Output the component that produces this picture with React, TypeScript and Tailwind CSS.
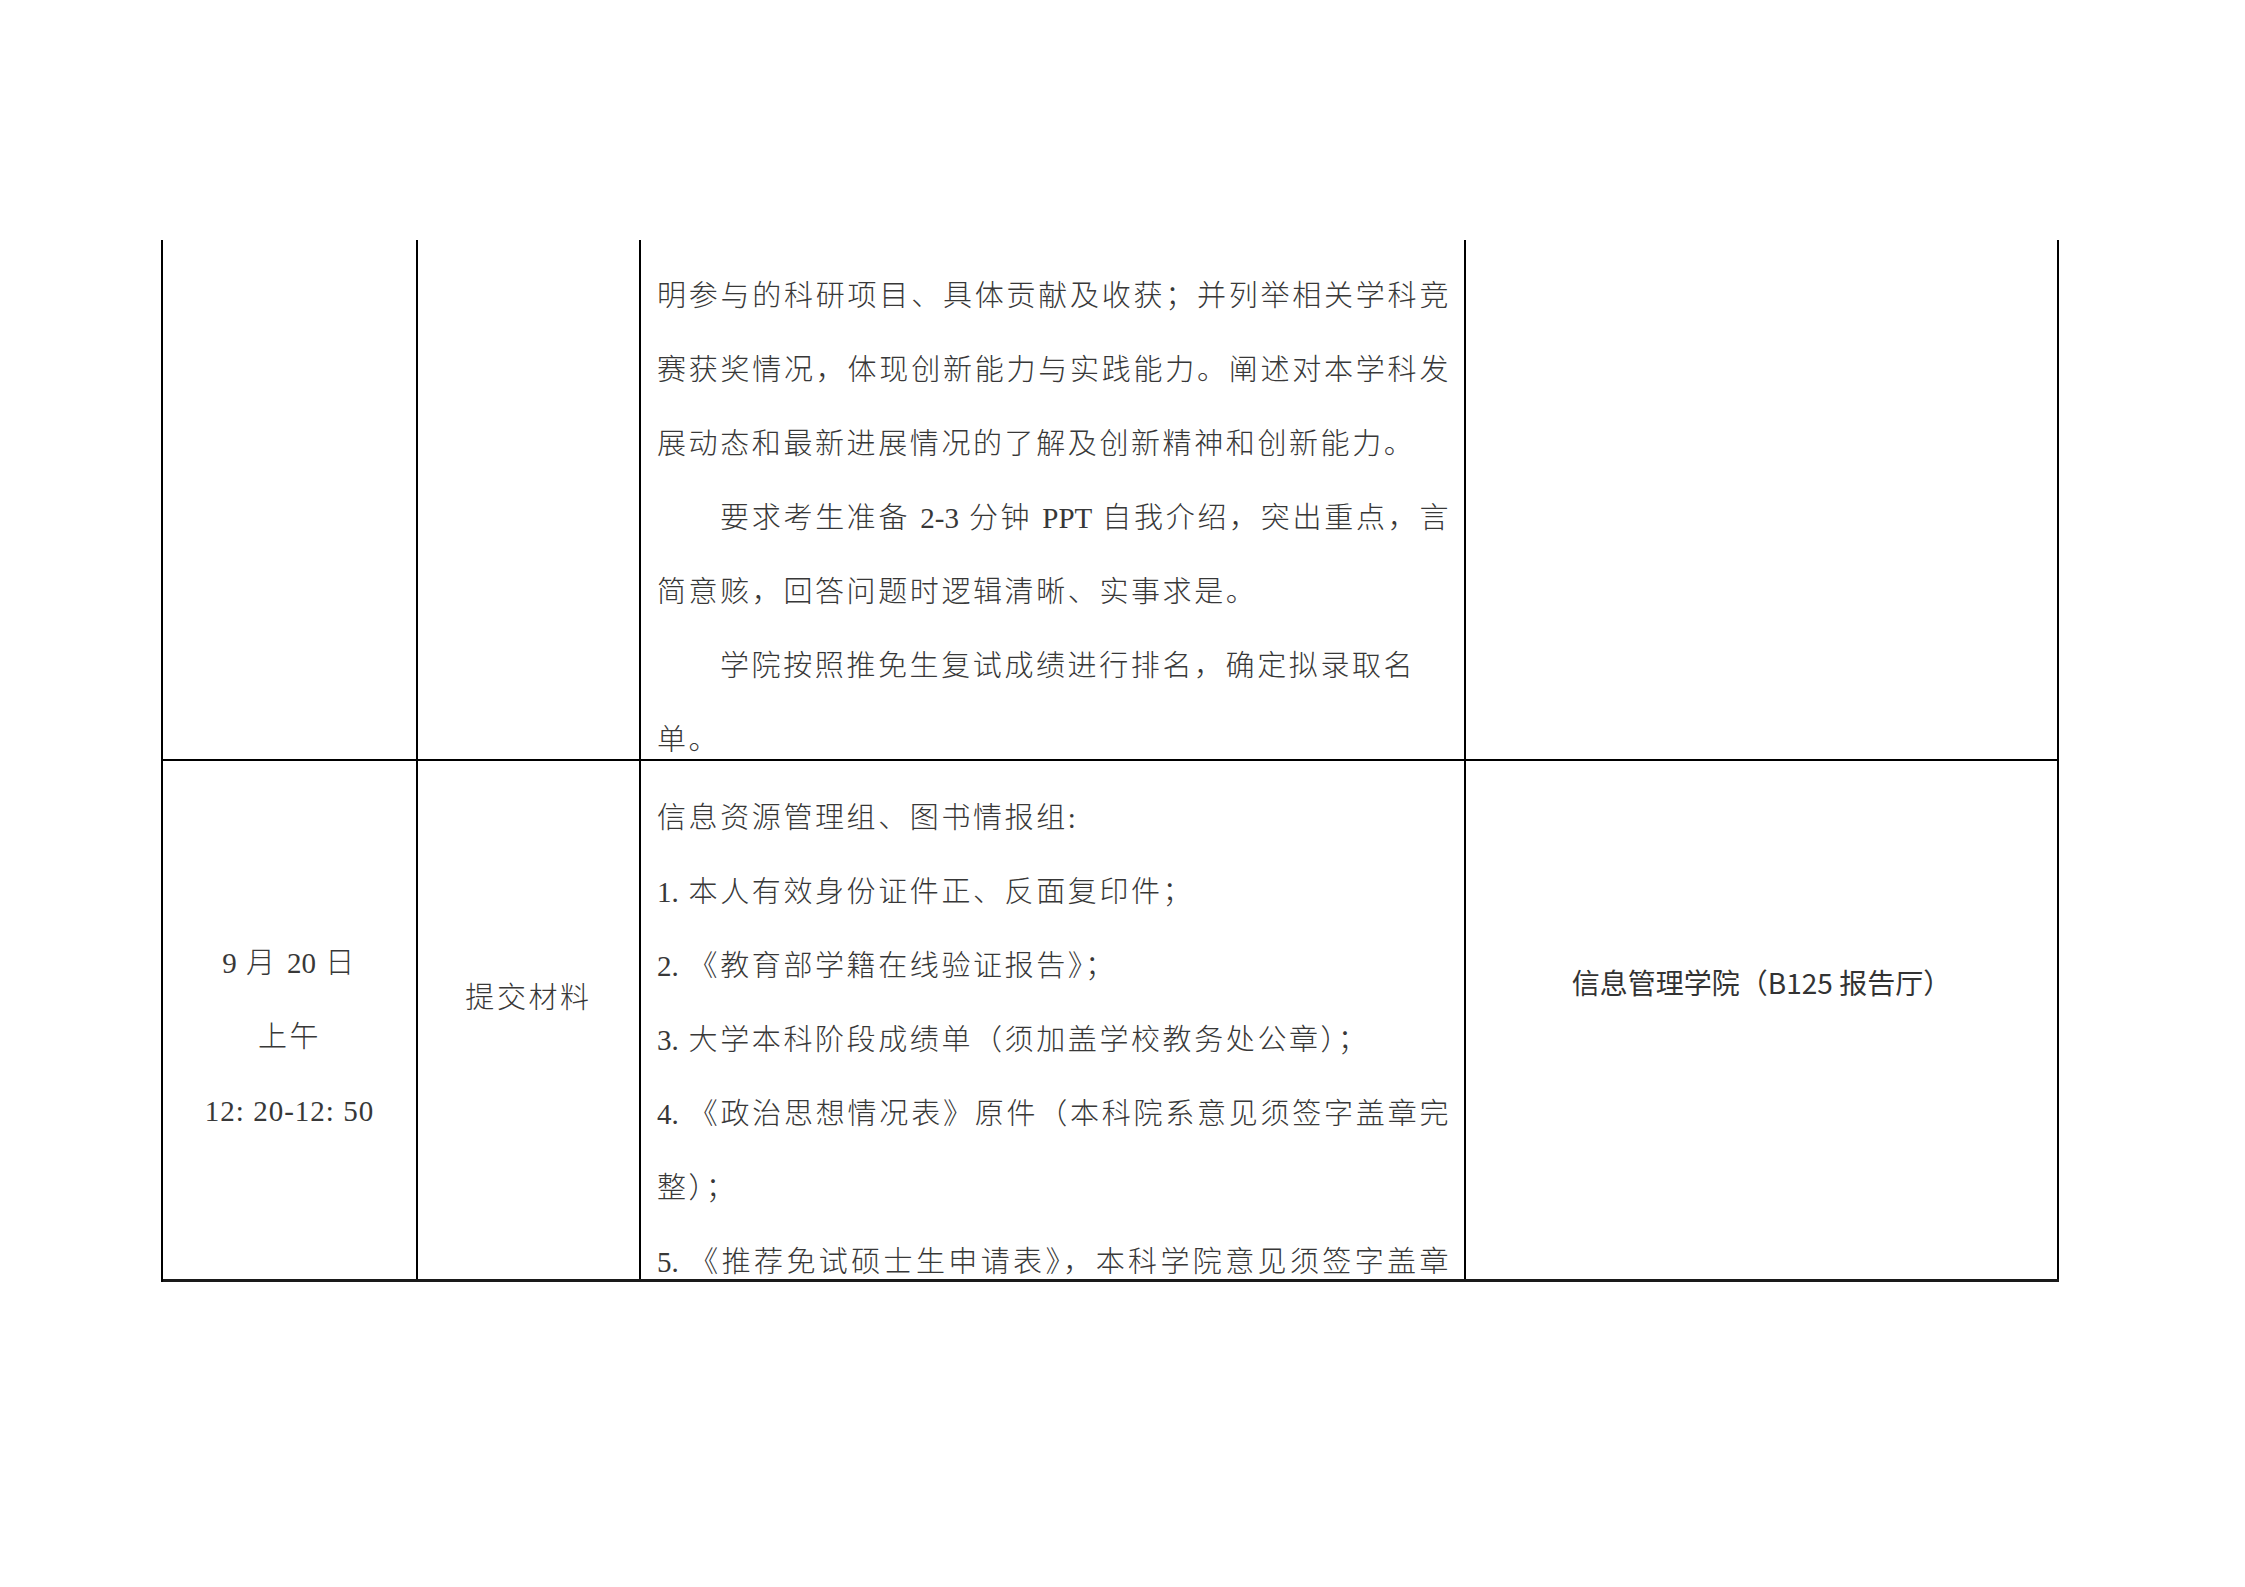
import React from "react";

const L = ({ children }: { children: React.ReactNode }) => (
  <span className="tracking-normal">{children}</span>
);

const N = ({ children }: { children: React.ReactNode }) => (
  <span className="inline-block w-[31.6px] indent-0 tracking-normal">{children}</span>
);

const serif = "font-['Liberation_Serif','Noto_Sans_CJK_SC',serif]";

function Line({
  children,
  justify = false,
  indent = false,
}: {
  children: React.ReactNode;
  justify?: boolean;
  indent?: boolean;
}) {
  return (
    <div
      className={
        "whitespace-nowrap " +
        (justify ? "text-justify [text-align-last:justify] " : "") +
        (indent ? "indent-[63px]" : "")
      }
    >
      {children}
    </div>
  );
}

export default function App() {
  return (
    <div className="w-[2245px] h-[1587px] bg-white overflow-hidden">
      <div className="pt-[240px] pl-[161px]">
        <div
          className={
            "w-[1898px] border-l-2 border-black text-[29px] leading-[74px] tracking-[2.6px] text-[#383838] font-light " +
            serif
          }
        >
          {/* Row 1 */}
          <div className="grid grid-cols-[255px_223px_825px_593px] h-[521px] border-b-2 border-black">
            <div className="border-r-2 border-black" />
            <div className="border-r-2 border-black" />
            <div className="border-r-2 border-black pl-[16px] pr-[13px] pt-[19px] overflow-hidden">
              <Line justify>明参与的科研项目、具体贡献及收获；并列举相关学科竞</Line>
              <Line justify>赛获奖情况，体现创新能力与实践能力。阐述对本学科发</Line>
              <Line>展动态和最新进展情况的了解及创新精神和创新能力。</Line>
              <Line justify indent>
                要求考生准备 <L>2-3</L> 分钟 <L>PPT</L> 自我介绍，突出重点，言
              </Line>
              <Line>简意赅，回答问题时逻辑清晰、实事求是。</Line>
              <Line indent>学院按照推免生复试成绩进行排名，确定拟录取名</Line>
              <Line>单。</Line>
            </div>
            <div className="border-r-2 border-black" />
          </div>

          {/* Row 2 */}
          <div className="grid grid-cols-[255px_223px_825px_593px] h-[521px] border-b-[3px] border-[#1a1a1a]">
            <div className="border-r-2 border-black pt-[165px] text-center overflow-hidden">
              <div className="whitespace-nowrap [word-spacing:2px]">
                <L>9 </L>月<L> 20 </L>日
              </div>
              <div>上午</div>
              <div className="whitespace-nowrap tracking-[1px]">12:&nbsp;20-12:&nbsp;50</div>
            </div>
            <div className="border-r-2 border-black pt-[200px] text-center overflow-hidden">
              <div>提交材料</div>
            </div>
            <div className="border-r-2 border-black pl-[16px] pr-[13px] pt-[20px] overflow-hidden">
              <Line>
                信息资源管理组、图书情报组<L>:</L>
              </Line>
              <Line>
                <N>1.</N>本人有效身份证件正、反面复印件；
              </Line>
              <Line>
                <N>2.</N>《教育部学籍在线验证报告》；
              </Line>
              <Line>
                <N>3.</N>大学本科阶段成绩单（须加盖学校教务处公章）；
              </Line>
              <Line justify>
                <N>4.</N>《政治思想情况表》原件（本科院系意见须签字盖章完
              </Line>
              <Line>整）；</Line>
              <Line justify>
                <N>5.</N>《推荐免试硕士生申请表》，本科学院意见须签字盖章
              </Line>
            </div>
            <div className="border-r-2 border-black pt-[184px] text-center overflow-hidden font-['Noto_Sans_CJK_SC',sans-serif] text-[28px] tracking-normal font-normal text-[#333]">
              <div className="whitespace-nowrap">信息管理学院（B125 报告厅）</div>
            </div>
          </div>
        </div>
      </div>
    </div>
  );
}
